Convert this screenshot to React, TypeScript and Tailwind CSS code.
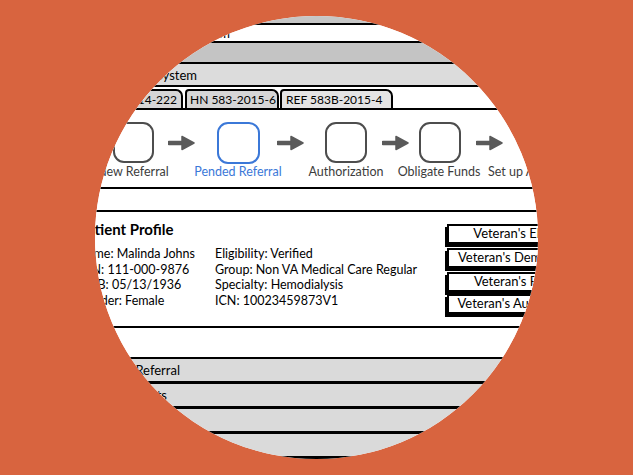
import React from "react";

function Arrow() {
  return (
    <svg width="27" height="16" viewBox="0 0 27 16" className="block">
      <path d="M1 8 L16 8" stroke="#5a5a5a" strokeWidth="4.5" strokeLinecap="round" />
      <path d="M14 1.5 L26 8 L14 14.5 Z" fill="#5a5a5a" stroke="#5a5a5a" strokeWidth="1.5" strokeLinejoin="round" />
    </svg>
  );
}

export default function App() {
  return (
    <div className="flex h-[475px] w-[633px] items-center justify-center bg-[#d8643f] font-[family-name:Lato,sans-serif] text-black">
      <div className="h-[443px] w-[443px] overflow-hidden rounded-full bg-white">
        <div className="-ml-[95px] -mt-[16px] w-[633px]">
          {/* top bars */}
          <div className="h-[25px] border-b-2 border-black bg-[#c6c6c6]" />
          <div className="h-[18px] border-b-2 border-black bg-white">
            <div className="w-[230px] whitespace-nowrap text-right text-[13px] leading-[16px]">Veterans Health Information System</div>
          </div>
          <div className="h-[21px] border-b-2 border-black bg-[#c4c4c4]" />
          <div className="flex h-[23px] items-center border-b-2 border-black bg-[#dcdcdc]">
            <div className="w-[197px] whitespace-nowrap text-right text-[13px] leading-[16px]">Community Care Referral System</div>
          </div>
          {/* tabs */}
          <div className="flex h-[23px] items-end border-b-2 border-black bg-white pt-[2px]">
            <div className="ml-[40px] flex h-[19px] w-[143px] items-center justify-end whitespace-nowrap rounded-tl-[4px] rounded-tr-[7px] border-2 border-b-0 border-black bg-[#d6d6d6] pr-[4px] text-[12px] leading-[15px]">
              REF 583A-2014-222
            </div>
            <div className="ml-[2px] flex h-[19px] w-[94px] items-center whitespace-nowrap rounded-tl-[4px] rounded-tr-[7px] border-2 border-b-0 border-black bg-[#d6d6d6] pl-[3px] text-[12px] leading-[15px]">
              HN 583-2015-6
            </div>
            <div className="ml-[1px] flex h-[19px] w-[113px] items-center whitespace-nowrap rounded-tl-[4px] rounded-tr-[7px] border-2 border-b-0 border-black bg-[#e4e4e4] pl-[4px] text-[12px] leading-[15px]">
              REF 583B-2015-4
            </div>
          </div>
          {/* steps */}
          <div className="h-[79px] border-b-2 border-black bg-white pt-[12px]">
            <div className="flex h-[41px] items-center">
              <div className="ml-[113px] h-[41px] w-[41px] rounded-[11px] border-2 border-[#4d4d4d]" />
              <div className="ml-[14px]"><Arrow /></div>
              <div className="ml-[22px] h-[42px] w-[43px] rounded-[11px] border-2 border-[#3b78d8]" />
              <div className="ml-[17px]"><Arrow /></div>
              <div className="ml-[21px] h-[41px] w-[42px] rounded-[11px] border-2 border-[#4d4d4d]" />
              <div className="ml-[15px]"><Arrow /></div>
              <div className="ml-[10px] h-[41px] w-[42px] rounded-[11px] border-2 border-[#4d4d4d]" />
              <div className="ml-[15px]"><Arrow /></div>
              <div className="ml-[20px] h-[41px] w-[42px] rounded-[11px] border-2 border-[#4d4d4d]" />
            </div>
            <div className="mt-[1px] flex whitespace-nowrap text-[12.5px] leading-[16px] text-[#3c3c3c]">
              <div className="ml-[88px] w-[90px] text-center">New Referral</div>
              <div className="ml-[15px] w-[90px] text-center text-[#3b78d8]">Pended Referral</div>
              <div className="ml-[18px] w-[90px] text-center">Authorization</div>
              <div className="ml-[3px] w-[90px] text-center">Obligate Funds</div>
              <div className="ml-[4px]">Set up Appointment</div>
            </div>
          </div>
          <div className="h-[23px] border-b-2 border-black bg-white" />
          {/* patient profile */}
          <div className="flex h-[116px] border-b-2 border-black bg-white">
            <div className="ml-[78px] w-[369px] pt-[8px]">
              <div className="text-[15px] font-bold leading-[18px]">Patient Profile</div>
              <div className="mt-[8px] flex whitespace-nowrap text-[12.5px] leading-[15.5px]">
                <div className="w-[137px]">
                  <div>Name: Malinda Johns</div>
                  <div>SSN: 111-000-9876</div>
                  <div>DOB: 05/13/1936</div>
                  <div>Gender: Female</div>
                </div>
                <div>
                  <div>Eligibility: Verified</div>
                  <div>Group: Non VA Medical Care Regular</div>
                  <div>Specialty: Hemodialysis</div>
                  <div>ICN: 10023459873V1</div>
                </div>
              </div>
            </div>
            <div className="w-[160px] whitespace-nowrap pt-[12px] text-[13px] leading-[15px]">
              <div className="h-[20px] border-2 border-black bg-white text-center shadow-[-2px_3px_0_0_#000]">Veteran's Eligibility</div>
              <div className="mt-[4px] h-[20px] border-2 border-black bg-white text-center shadow-[-2px_3px_0_0_#000]">Veteran's Demographics</div>
              <div className="mt-[4px] h-[20px] border-2 border-black bg-white text-center shadow-[-2px_3px_0_0_#000]">Veteran's Referrals</div>
              <div className="mt-[2px] h-[20px] border-2 border-black bg-white text-center shadow-[-2px_3px_0_0_#000]">Veteran's Authorizations</div>
            </div>
          </div>
          <div className="h-[31px] border-b-2 border-black bg-white" />
          {/* collapsed sections */}
          <div className="flex h-[25px] items-center border-b-[3px] border-black bg-[#dadada] pb-[1px]">
            <div className="w-[180px] whitespace-nowrap text-right text-[13px] leading-[16px]">Pended Referral</div>
          </div>
          <div className="flex h-[25px] items-center border-b-[3px] border-black bg-[#dadada] pb-[1px]">
            <div className="w-[167px] whitespace-nowrap text-right text-[13px] leading-[16px]">Documents</div>
          </div>
          <div className="h-[25px] border-b-[3px] border-black bg-[#dadada]" />
          <div className="h-[25px] border-b-[3px] border-black bg-[#dadada]" />
          <div className="h-[25px] border-b-[3px] border-black bg-[#dadada]" />
        </div>
      </div>
    </div>
  );
}
